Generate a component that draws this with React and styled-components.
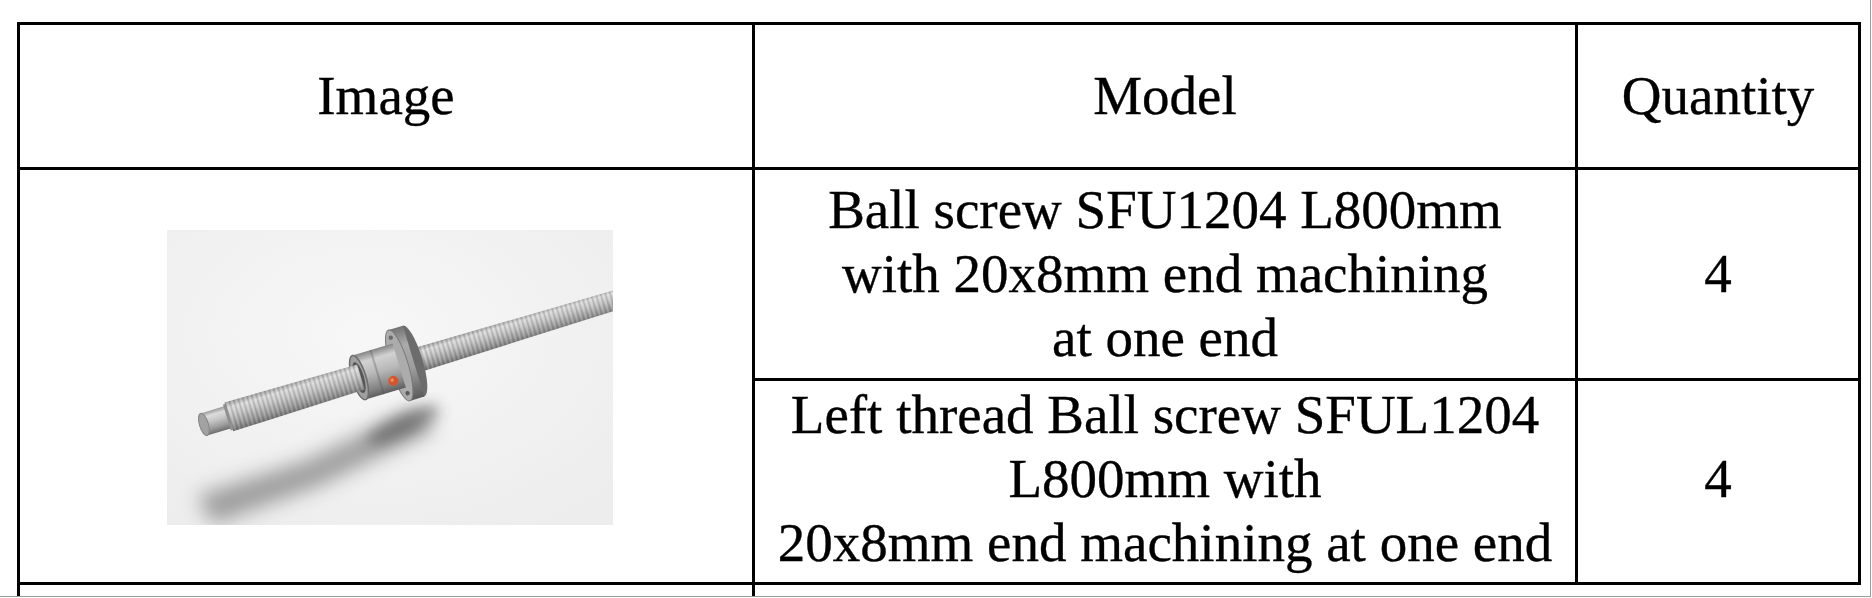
import React from "react";
import styled, { createGlobalStyle } from "styled-components";

const GlobalStyle = createGlobalStyle`
  html, body {
    margin: 0;
    padding: 0;
    background: #fff;
  }
  body {
    font-family: "Liberation Serif", "Times New Roman", serif;
  }
`;

const Frame = styled.div`
  width: 1871px;
  height: 597px;
  border-right: 1px solid #9c9c9c;
  border-bottom: 1px solid #9c9c9c;
  overflow: hidden;
  padding: 22px 0 0 17px;
  box-sizing: border-box;
`;

const Sheet = styled.div`
  display: grid;
  grid-template-columns: 735px 823px 283px;
  grid-template-rows: 145px 211px 204px 120px;
  width: fit-content;
  border-left: 3px solid #000;
  border-top: 3px solid #000;
`;

const Cell = styled.div`
  box-sizing: border-box;
  display: flex;
  align-items: center;
  justify-content: center;
  text-align: center;
  border-right: ${({ $open }) => ($open ? "none" : "3px solid #000")};
  border-bottom: 3px solid #000;
  grid-row: ${({ $rows }) => ($rows ? `span ${$rows}` : "auto")};
  grid-column: ${({ $cols }) => ($cols ? `span ${$cols}` : "auto")};
  padding: ${({ $pad }) => $pad || "0"};
  font-size: 55px;
  line-height: 64px;
  color: #000;
  -webkit-text-stroke: 0.35px #000;
`;

const HeadText = styled.span`
  font-size: 55px;
  line-height: 64px;
`;

const PhotoBox = styled.div`
  width: 446px;
  height: 295px;
  margin-left: 8px;
  margin-top: 3px;
`;

const BallScrewPhoto = () => (
  <svg width="446" height="295" viewBox="0 0 446 295">
    <defs>
      <radialGradient id="bg" cx="45%" cy="35%" r="75%">
        <stop offset="0" stopColor="#f7f7f7" />
        <stop offset="1" stopColor="#ededed" />
      </radialGradient>
      <linearGradient id="rod" x1="0" y1="0" x2="0" y2="1">
        <stop offset="0" stopColor="#9a9a9a" />
        <stop offset="0.2" stopColor="#dcdcdc" />
        <stop offset="0.45" stopColor="#c6c6c6" />
        <stop offset="0.78" stopColor="#999" />
        <stop offset="1" stopColor="#6e6e6e" />
      </linearGradient>
      <linearGradient id="nut" x1="0" y1="0" x2="0" y2="1">
        <stop offset="0" stopColor="#858585" />
        <stop offset="0.2" stopColor="#d2d2d2" />
        <stop offset="0.5" stopColor="#b8b8b8" />
        <stop offset="0.85" stopColor="#808080" />
        <stop offset="1" stopColor="#5e5e5e" />
      </linearGradient>
      <linearGradient id="flange" x1="0" y1="0" x2="0" y2="1">
        <stop offset="0" stopColor="#737373" />
        <stop offset="0.25" stopColor="#ababab" />
        <stop offset="0.6" stopColor="#9c9c9c" />
        <stop offset="1" stopColor="#5a5a5a" />
      </linearGradient>
      <pattern id="threads" width="4.6" height="80" patternUnits="userSpaceOnUse">
        <rect x="0" y="0" width="1.6" height="80" fill="rgba(60,60,60,0.2)" />
        <rect x="2.5" y="0" width="1" height="80" fill="rgba(255,255,255,0.2)" />
      </pattern>
      <filter id="soft" x="-30%" y="-60%" width="160%" height="220%">
        <feGaussianBlur stdDeviation="10" />
      </filter>
      <filter id="softer" x="-50%" y="-100%" width="200%" height="300%">
        <feGaussianBlur stdDeviation="7" />
      </filter>
    </defs>

    <rect x="0" y="0" width="446" height="295" fill="url(#bg)" />

    {/* shadow on the floor */}
    <path
      d="M30 266 L140 230 L240 182 L266 186 L264 202 L152 256 L46 294 Z"
      fill="#5a5a5a"
      opacity="0.55"
      filter="url(#soft)"
    />
    <ellipse
      cx="236"
      cy="195"
      rx="40"
      ry="10"
      transform="rotate(-26 236 195)"
      fill="#404040"
      opacity="0.5"
      filter="url(#softer)"
    />

    <g transform="translate(35 195) rotate(-16.8)">
      {/* far part of the screw */}
      <path d="M206 -12.5 L470 -9.5 L470 9.5 L206 12.5 Z" fill="url(#rod)" />
      <path d="M206 -12.5 L470 -9.5 L470 9.5 L206 12.5 Z" fill="url(#threads)" />

      {/* flange */}
      <ellipse cx="221" cy="0" rx="9" ry="37" fill="#6c6c6c" />
      <rect x="206" y="-37" width="15" height="74" fill="url(#flange)" />
      <ellipse cx="206" cy="0" rx="9" ry="37" fill="#acacac" stroke="#7a7a7a" strokeWidth="1" />
      <circle cx="206" cy="-29" r="2.2" fill="#6a6a6a" />
      <circle cx="206" cy="29" r="2.2" fill="#5a5a5a" />

      {/* nut body */}
      <rect x="164" y="-23" width="42" height="46" fill="url(#nut)" />
      <rect x="182" y="-23" width="2" height="46" fill="rgba(80,80,80,0.3)" />
      <ellipse cx="164" cy="0" rx="7" ry="23" fill="#a0a0a0" stroke="#6d6d6d" strokeWidth="1.5" />
      <ellipse cx="164" cy="0" rx="5" ry="16" fill="#555" />
      <circle cx="196" cy="13" r="5" fill="#d4552b" />
      <circle cx="195" cy="12" r="1.8" fill="#f08a5e" />

      {/* near part of the screw */}
      <path d="M28 -15 L166 -13 L166 13 L28 15 Z" fill="url(#rod)" />
      <path d="M28 -15 L166 -13 L166 13 L28 15 Z" fill="url(#threads)" />

      {/* end journal */}
      <rect x="2" y="-11.5" width="27" height="23" fill="url(#rod)" />
      <rect x="26" y="-13.5" width="3" height="27" fill="#8f8f8f" />
      <ellipse cx="2" cy="0" rx="4.5" ry="11.5" fill="#a2a2a2" stroke="#848484" strokeWidth="1" />
    </g>
  </svg>
);

const App = () => (
  <>
    <GlobalStyle />
    <Frame>
      <Sheet>
        <Cell>
          <HeadText>Image</HeadText>
        </Cell>
        <Cell>
          <HeadText>Model</HeadText>
        </Cell>
        <Cell>
          <HeadText>Quantity</HeadText>
        </Cell>

        <Cell $rows={2}>
          <PhotoBox>
            <BallScrewPhoto />
          </PhotoBox>
        </Cell>
        <Cell>
          Ball screw SFU1204 L800mm
          <br />
          with 20x8mm end machining
          <br />
          at one end
        </Cell>
        <Cell>4</Cell>

        <Cell $pad="0 0 6px 0">
          Left thread Ball screw SFUL1204
          <br />
          L800mm with
          <br />
          20x8mm end machining at one end
        </Cell>
        <Cell $pad="0 0 6px 0">4</Cell>

        <Cell />
        <Cell $cols={2} $open />
      </Sheet>
    </Frame>
  </>
);

export default App;
